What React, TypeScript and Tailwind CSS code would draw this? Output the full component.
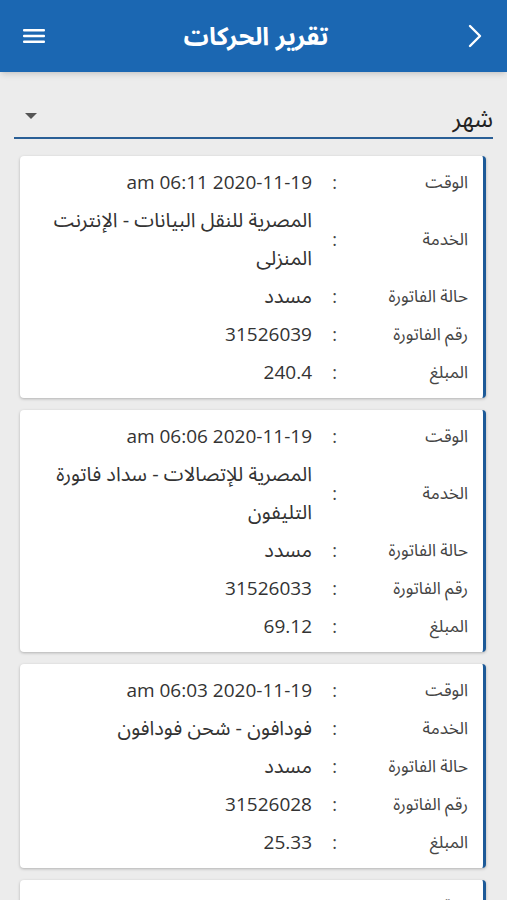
import React from 'react';

interface Transaction {
  time: string;
  service: string;
  status: string;
  invoice: string;
  amount: string;
}

const transactions: Transaction[] = [
  {
    time: 'am 06:11 2020-11-19',
    service: 'المصرية للنقل البيانات - الإنترنت المنزلى',
    status: 'مسدد',
    invoice: '31526039',
    amount: '240.4',
  },
  {
    time: 'am 06:06 2020-11-19',
    service: 'المصرية للإتصالات - سداد فاتورة التليفون',
    status: 'مسدد',
    invoice: '31526033',
    amount: '69.12',
  },
  {
    time: 'am 06:03 2020-11-19',
    service: 'فودافون - شحن فودافون',
    status: 'مسدد',
    invoice: '31526028',
    amount: '25.33',
  },
  {
    time: 'am 08:24 2020-11-18',
    service: 'فودافون - شحن فودافون',
    status: 'مسدد',
    invoice: '31526011',
    amount: '10',
  },
];

function Row({ label, value, arabic }: { label: string; value: string; arabic?: boolean }) {
  return (
    <div className="flex items-center">
      <div className="w-[122px] shrink-0 text-[17px] leading-[38px] text-[#444]">{label}</div>
      <div className="w-[34px] shrink-0 pr-[9px] text-right text-[18px] leading-[38px] text-[#444]">:</div>
      <div
        className={
          arabic
            ? 'flex-1 text-right text-[20px] leading-[38px] text-[#333]'
            : 'flex-1 text-right text-[19px] leading-[38px] text-[#333]'
        }
      >
        {value}
      </div>
    </div>
  );
}

export default function App() {
  return (
    <div
      dir="rtl"
      className="h-[900px] w-[507px] overflow-hidden bg-[#ececec]"
      style={{ fontFamily: '"Open Sans", "Noto Sans Arabic", "Noto Naskh Arabic", "DejaVu Sans", sans-serif' }}
    >
      {/* Header */}
      <div className="flex h-[72px] items-center justify-between bg-[#1b67b2] pl-[23px] pr-[24px] shadow-md">
        <svg width="16" height="26" viewBox="0 0 16 26">
          <path d="M3 3 L13 13 L3 23" fill="none" stroke="white" strokeWidth="2.4" strokeLinecap="round" strokeLinejoin="round" />
        </svg>
        <h1 className="text-[25px] font-bold text-white">تقرير الحركات</h1>
        <svg width="22" height="16" viewBox="0 0 22 16">
          <rect x="0" y="1" width="22" height="2.4" rx="1" fill="white" />
          <rect x="0" y="6.8" width="22" height="2.4" rx="1" fill="white" />
          <rect x="0" y="12.6" width="22" height="2.4" rx="1" fill="white" />
        </svg>
      </div>

      {/* Period dropdown */}
      <div className="mx-[14px] mt-[30px] flex items-center justify-between border-b-[2px] border-[#2a5f96] pb-[3px]">
        <span className="text-[24px] leading-[32px] text-[#222]">شهر</span>
        <svg width="14" height="8" viewBox="0 0 14 8" className="ml-[10px] mb-[4px]">
          <path d="M1 1 L13 1 L7 7 Z" fill="#555" />
        </svg>
      </div>

      {/* Cards */}
      <div className="mt-[17px] flex flex-col gap-[12px] pl-[20px] pr-[21px]">
        {transactions.map((t, i) => (
          <div
            key={i}
            className="rounded-[4px] border-r-[3px] border-[#1d5a98] bg-white py-[7px] pl-[10px] pr-[15px] shadow-[0_1px_3px_rgba(0,0,0,0.25)]"
          >
            <Row label="الوقت" value={t.time} />
            <Row label="الخدمة" value={t.service} arabic />
            <Row label="حالة الفاتورة" value={t.status} arabic />
            <Row label="رقم الفاتورة" value={t.invoice} />
            <Row label="المبلغ" value={t.amount} />
          </div>
        ))}
      </div>
    </div>
  );
}
